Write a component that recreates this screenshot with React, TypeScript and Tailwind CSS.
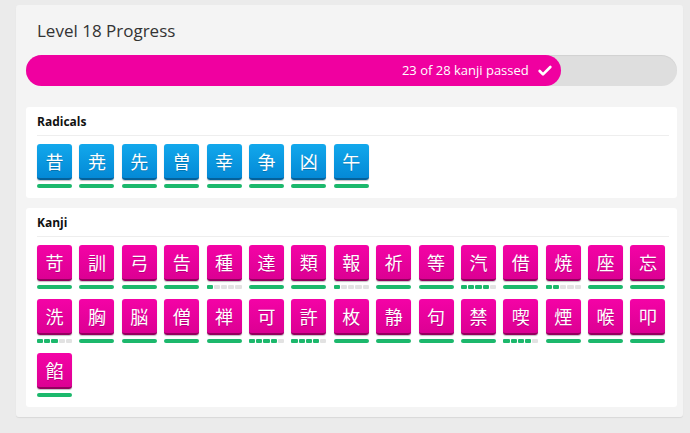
import { Check } from 'lucide-react';

type Item = { char: string; stage: number };

const radicals: Item[] = ['昔', '尭', '先', '曽', '幸', '争', '凶', '午'].map((c) => ({
  char: c,
  stage: 5,
}));

const kanji: Item[] = [
  { char: '苛', stage: 5 },
  { char: '訓', stage: 5 },
  { char: '弓', stage: 5 },
  { char: '告', stage: 5 },
  { char: '種', stage: 1 },
  { char: '達', stage: 5 },
  { char: '類', stage: 5 },
  { char: '報', stage: 1 },
  { char: '祈', stage: 5 },
  { char: '等', stage: 5 },
  { char: '汽', stage: 4 },
  { char: '借', stage: 5 },
  { char: '焼', stage: 2 },
  { char: '座', stage: 5 },
  { char: '忘', stage: 5 },
  { char: '洗', stage: 3 },
  { char: '胸', stage: 5 },
  { char: '脳', stage: 5 },
  { char: '僧', stage: 5 },
  { char: '禅', stage: 5 },
  { char: '可', stage: 4 },
  { char: '許', stage: 4 },
  { char: '枚', stage: 5 },
  { char: '静', stage: 5 },
  { char: '句', stage: 5 },
  { char: '禁', stage: 5 },
  { char: '喫', stage: 4 },
  { char: '煙', stage: 5 },
  { char: '喉', stage: 5 },
  { char: '叩', stage: 5 },
  { char: '餡', stage: 5 },
];

function StageBar({ stage }: { stage: number }) {
  if (stage >= 5) {
    return <div className="mt-[4px] h-[4px] w-full rounded-full bg-[#1cb86c]" />;
  }
  return (
    <div className="mt-[4px] flex h-[4px] w-full gap-[1px]">
      {[0, 1, 2, 3, 4].map((i) => (
        <div
          key={i}
          className={`h-full flex-1 rounded-[1px] ${i < stage ? 'bg-[#1cb86c]' : 'bg-[#e2e2e2]'}`}
        />
      ))}
    </div>
  );
}

function Tile({ item, kind }: { item: Item; kind: 'radical' | 'kanji' }) {
  const colors =
    kind === 'radical'
      ? 'bg-gradient-to-b from-[#12a8ec] to-[#0489d6] border-b-[#05619a]'
      : 'bg-gradient-to-b from-[#f403a6] to-[#dc0093] border-b-[#93005f]';
  return (
    <div className="flex w-[35px] flex-col">
      <div
        className={`flex h-[36px] w-[35px] items-center justify-center rounded-[3px] border-b-2 text-[18px] leading-none text-white shadow-[0_1px_1px_rgba(0,0,0,0.25)] [text-shadow:0_1px_0_rgba(0,0,0,0.2)] ${colors}`}
        style={{ fontFamily: '"Noto Sans CJK JP", "Noto Sans", sans-serif' }}
      >
        {item.char}
      </div>
      <StageBar stage={item.stage} />
    </div>
  );
}

function Section({ title, items, kind }: { title: string; items: Item[]; kind: 'radical' | 'kanji' }) {
  return (
    <div className="rounded-[3px] bg-white pb-[10px] pl-[11px] pr-[8px] pt-[7px]">
      <div className="border-b border-[#eeeeee] pb-[5px] text-[12px] font-bold leading-[16px] text-[#111]">
        {title}
      </div>
      <div className="mt-[8px] flex flex-wrap gap-x-[7.4px] gap-y-[10px]">
        {items.map((it) => (
          <Tile key={it.char} item={it} kind={kind} />
        ))}
      </div>
    </div>
  );
}

export default function App() {
  const passed = 23;
  const total = 28;
  return (
    <div
      className="h-[433px] w-[690px] bg-[#ebebeb] pl-[16px] pt-[5px]"
      style={{ fontFamily: '"Open Sans", "Noto Sans", sans-serif' }}
    >
      <div className="w-[667px] rounded-[3px] bg-[#f4f4f4] pb-[10px] pl-[10px] pr-[6px] pt-[14px] shadow-[0_1px_1px_rgba(0,0,0,0.08)]">
        <h1 className="pl-[11px] text-[17px] font-normal leading-[24px] text-[#333]">Level 18 Progress</h1>
        <div className="mt-[12px] h-[31px] w-full rounded-full bg-[#dedede] shadow-[inset_0_1px_1px_rgba(0,0,0,0.06)]">
          <div
            className="flex h-full items-center justify-end gap-[8px] rounded-full bg-[#f000a0] pr-[8px]"
            style={{ width: `${(passed / total) * 100}%` }}
          >
            <span className="text-[13px] text-white">
              {passed} of {total} kanji passed
            </span>
            <Check className="h-[16px] w-[16px] text-white" strokeWidth={4} />
          </div>
        </div>
        <div className="mt-[21px] flex flex-col gap-[10px]">
          <Section title="Radicals" items={radicals} kind="radical" />
          <Section title="Kanji" items={kanji} kind="kanji" />
        </div>
      </div>
    </div>
  );
}
